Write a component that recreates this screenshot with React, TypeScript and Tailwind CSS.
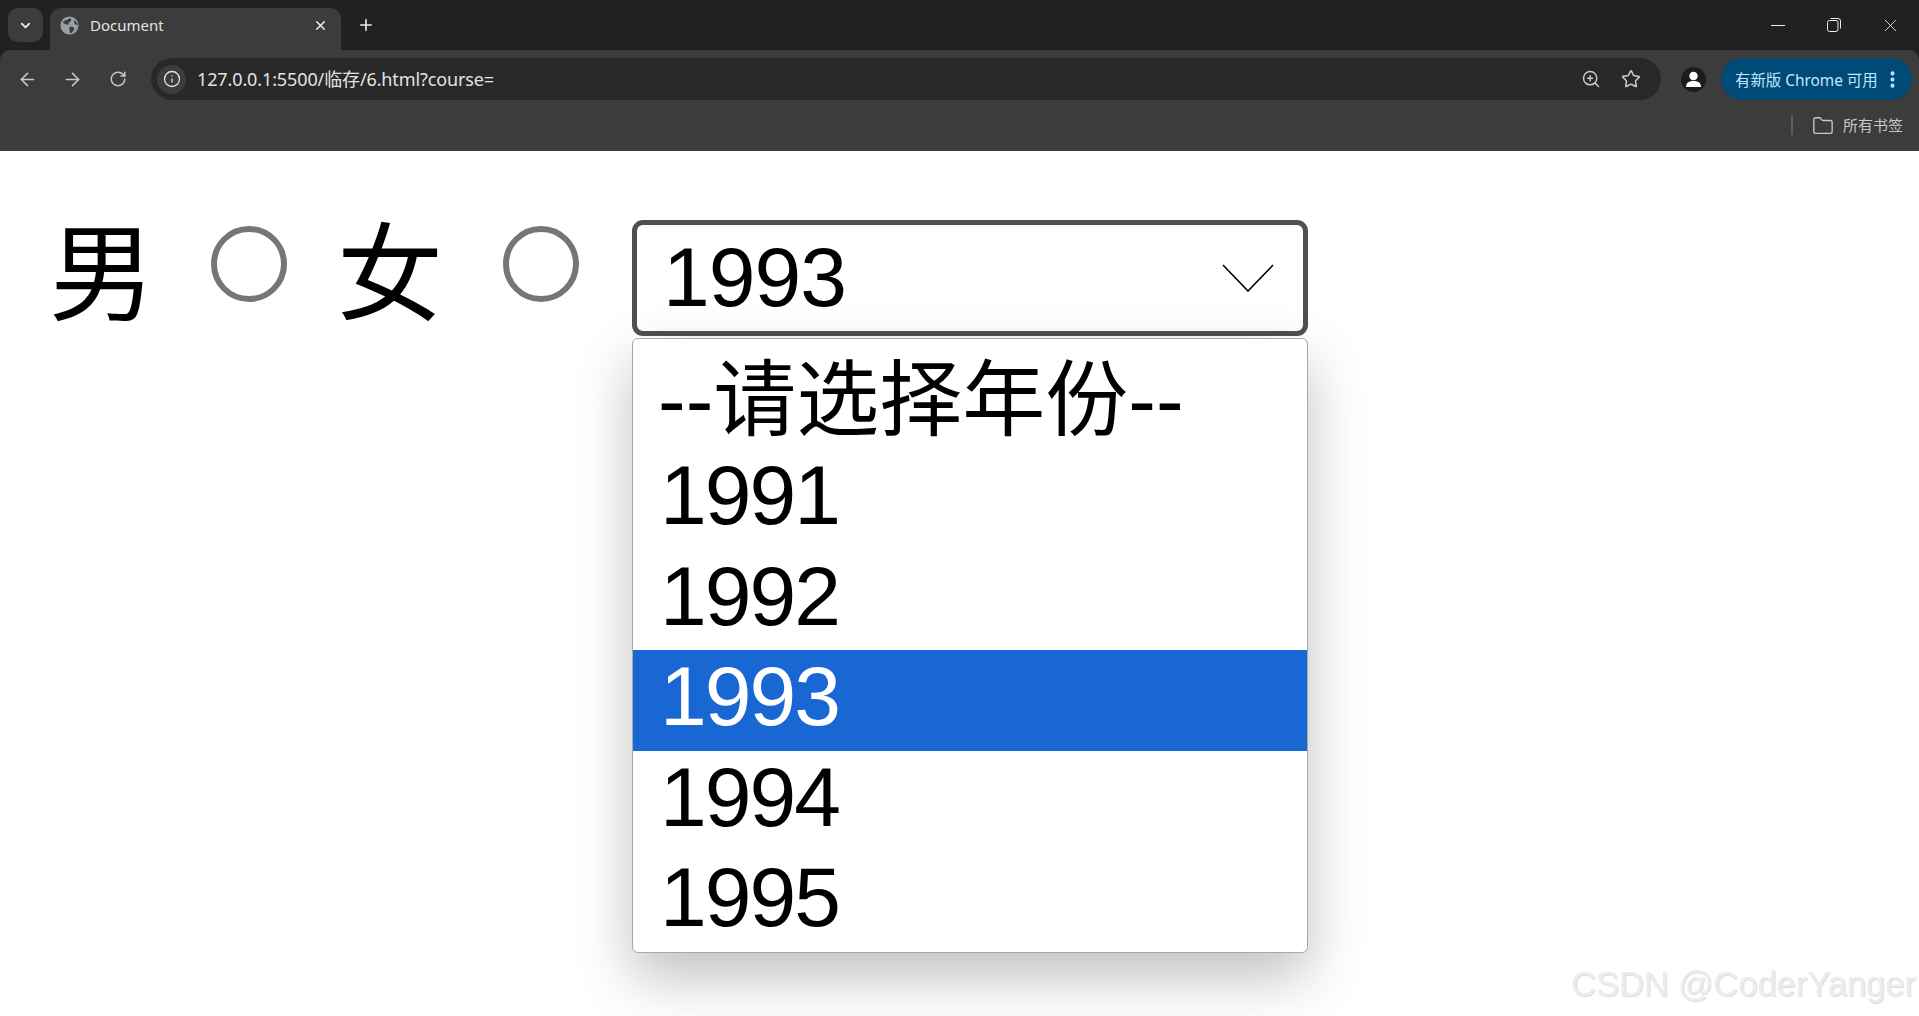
import React from 'react';
import { ArrowLeft, ArrowRight, Folder, Info, Plus, RotateCw, Star, X, ZoomIn, ChevronDown, EllipsisVertical } from 'lucide-react';

const years = ['--请选择年份--', '1991', '1992', '1993', '1994', '1995'];

function GlobeIcon() {
  return (
    <svg width="19" height="19" viewBox="0 0 20 20" className="shrink-0">
      <circle cx="10" cy="10" r="9.5" fill="#9aa0a6" />
      <path d="M3 5.5 L7.5 4 L11 2 L12 5 L9 7 L9.5 9 L6.5 9 L4 7.5 Z M10 11 L14 11.5 L15 14 L12.5 17.5 L10.5 18 L10 14.5 Z M14.5 4 L18 7 L18.5 10 L15.5 8.5 Z" fill="#3c3c3c" />
    </svg>
  );
}

function RestoreIcon() {
  return (
    <svg width="14" height="14" viewBox="0 0 14 14" fill="none" stroke="#e8eaed" strokeWidth="1">
      <rect x="0.5" y="2.5" width="10.5" height="11" rx="2" />
      <path d="M3.5 0.5 H11 A2.5 2.5 0 0 1 13.5 3 V10.5" />
    </svg>
  );
}

function ProfileIcon() {
  return (
    <div className="w-[25px] h-[25px] rounded-full bg-[#1b1c1c] flex items-center justify-center shrink-0">
      <svg width="17" height="17" viewBox="0 0 17 17" fill="#ffffff">
        <circle cx="8.5" cy="5" r="4.2" />
        <path d="M1 16 C1 11.5 4.5 10 8.5 10 C12.5 10 16 11.5 16 16 Z" />
      </svg>
    </div>
  );
}

function BrowserChrome() {
  return (
    <div className="bg-[#202222] font-['Noto_Sans','Noto_Sans_CJK_SC',sans-serif] text-[#e3e3e3]">
      <div className="h-[50px] flex items-end pl-[8px]">
        <div className="w-[35px] h-[34px] mb-[8px] rounded-[10px] bg-[#3c3c3c] flex items-center justify-center">
          <ChevronDown size={15} strokeWidth={3} color="#e8eaed" />
        </div>
        <div className="ml-[7px] w-[291px] h-[42px] bg-[#3c3c3c] rounded-t-[11px] flex items-center pl-[10px] pr-[13px] pb-[8px]">
          <GlobeIcon />
          <span className="ml-[11px] text-[15px] flex-1">Document</span>
          <X size={15} strokeWidth={2.5} color="#e8eaed" />
        </div>
        <div className="ml-[16px] h-[42px] flex items-center pb-[8px]">
          <Plus size={18} strokeWidth={2.2} color="#e8eaed" />
        </div>
        <div className="flex-1" />
        <div className="h-[50px] flex items-center pr-[18px]">
          <div className="w-[14px] h-px bg-[#e8eaed]" />
          <div className="ml-[42px]"><RestoreIcon /></div>
          <div className="ml-[39px]"><X size={21} strokeWidth={1} color="#e8eaed" /></div>
        </div>
      </div>

      <div className="h-[101px] bg-[#3c3c3c] rounded-t-[10px] flex flex-col">
        <div className="h-[50px] pt-[8px] flex items-start pr-[7px]">
          <div className="h-[42px] flex items-center pl-[17px]">
            <ArrowLeft size={21} strokeWidth={1.8} color="#c7c7c7" />
            <ArrowRight size={21} strokeWidth={1.8} color="#c7c7c7" className="ml-[24px]" />
            <RotateCw size={18} strokeWidth={2} color="#c7c7c7" className="ml-[26px]" />
          </div>
          <div className="ml-[24px] flex-1 h-[42px] rounded-full bg-[#282828] flex items-center pl-[6px] pr-[20px]">
            <div className="w-[29px] h-[29px] rounded-full bg-[#3c3c3c] flex items-center justify-center">
              <Info size={18} strokeWidth={1.7} color="#e3e3e3" />
            </div>
            <span className="ml-[11px] text-[18px] tracking-[-0.12px] flex-1 whitespace-nowrap">127.0.0.1:5500/临存/6.html?course=</span>
            <ZoomIn size={20} strokeWidth={1.8} color="#c7c7c7" />
            <Star size={20} strokeWidth={1.9} color="#c7c7c7" className="ml-[20px]" />
          </div>
          <div className="ml-[20px] h-[42px] flex items-center"><ProfileIcon /></div>
          <div className="ml-[15px] w-[191px] h-[42px] rounded-full bg-[#004a77] flex items-center pl-[14px] text-[#c2e7ff]">
            <span className="text-[15.4px] whitespace-nowrap pt-[3px]">有新版 Chrome 可用</span>
            <EllipsisVertical size={21} strokeWidth={2.6} color="#c2e7ff" className="ml-[4px]" />
          </div>
        </div>
        <div className="flex-1 flex items-center justify-end pr-[16px]">
          <div className="w-[2px] h-[19px] bg-[#5f5f5f]" />
          <Folder size={22} strokeWidth={1.5} color="#c7c7c7" className="ml-[19px]" />
          <span className="ml-[9px] text-[15px] text-[#c7c7c7]">所有书签</span>
        </div>
      </div>
    </div>
  );
}

function Radio() {
  return <div className="w-[76px] h-[76px] rounded-full border-[6px] border-[#767676] bg-white shrink-0" />;
}

export default function App() {
  return (
    <div className="h-[1016px] w-[1919px] overflow-hidden bg-white relative">
      <BrowserChrome />

      <div className="flex items-start pt-[69px] pl-[48px] text-black font-['Liberation_Sans','Noto_Sans_CJK_SC',sans-serif]">
        <span className="text-[106px] leading-[110px] w-[108px] pl-[1px]">男</span>
        <div className="ml-[55px] mt-[6px]"><Radio /></div>
        <span className="ml-[49px] text-[106px] leading-[110px] w-[108px] pl-[1px]">女</span>
        <div className="ml-[59px] mt-[6px]"><Radio /></div>

        <div className="ml-[53px] relative w-[676px]">
          <div className="h-[116px] border-[5px] border-[#505050] rounded-[11px] flex items-center pl-[26px] pr-[29px]">
            <span className="text-[84px] leading-none tracking-[-1px] flex-1 -mt-[2px]">1993</span>
            <svg width="52" height="28" viewBox="0 0 52 28" fill="none" stroke="#000" strokeWidth="1.6">
              <path d="M1 1 L26 27 L51 1" />
            </svg>
          </div>

          <div className="absolute left-0 top-[118px] w-[676px] bg-white rounded-[6px] border border-[#a8a8a8] overflow-hidden shadow-[0_24px_56px_rgba(0,0,0,0.25)]">
            {years.map((y, i) => (
              <div
                key={y}
                className={
                  (i === 0
                    ? 'h-[110px] pl-[25px] pt-[12px] text-[83px] '
                    : 'h-[100.5px] pl-[27px] pb-[8px] text-[84px] tracking-[-2px] ') +
                  (y === '1993' ? 'bg-[#1967d2] text-white ' : 'text-black ') +
                  'flex items-center leading-none whitespace-nowrap'
                }
              >
                {y}
              </div>
            ))}
          </div>
        </div>
      </div>

      <div className="absolute right-[3px] bottom-[15px] text-[34.5px] leading-none text-[#ececec] font-['Liberation_Sans',sans-serif] [text-shadow:1px_1px_1px_rgba(0,0,0,0.15)]">
        CSDN @CoderYanger
      </div>
    </div>
  );
}
